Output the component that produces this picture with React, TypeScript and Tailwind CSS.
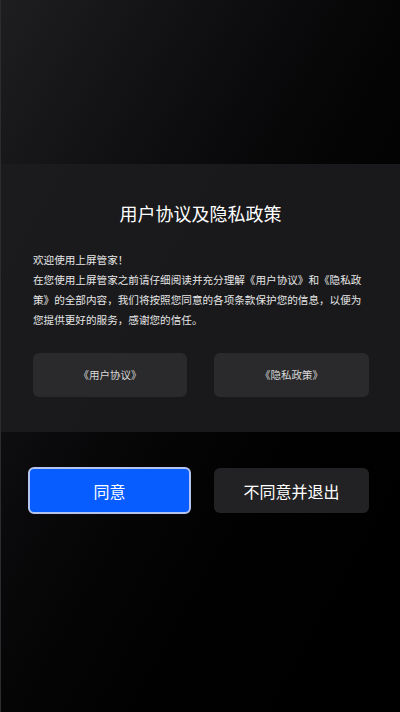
const font = { fontFamily: '"Noto Sans CJK SC", "Noto Sans", sans-serif' }

export default function App() {
  return (
    <div
      className="w-[400px] h-[712px] overflow-hidden flex flex-col bg-gradient-to-br from-[#1e1e21] to-black border-l border-[#2c2c30]"
      style={font}
    >
      {/* top blank area */}
      <div className="h-[164px] shrink-0" />

      {/* Agreement panel */}
      <div className="h-[268px] shrink-0 bg-[#1c1c1e]/90 flex flex-col px-[32px]">
        <h1 className="mt-[39px] h-[20px] leading-[20px] text-center text-[18px] text-white">
          用户协议及隐私政策
        </h1>

        <p className="mt-[27px] text-[10.6px] leading-[20px] text-[#e6e6e6] whitespace-nowrap">
          欢迎使用上屏管家！
          <br />
          在您使用上屏管家之前请仔细阅读并充分理解《用户协议》和《隐私政
          <br />
          策》的全部内容，我们将按照您同意的各项条款保护您的信息，以便为
          <br />
          您提供更好的服务，感谢您的信任。
        </p>

        <div className="mt-[23px] flex justify-between">
          <button className="w-[154px] h-[44px] rounded-md bg-[#2a2a2c] text-[10.5px] text-[#d8d8d8]">
            《用户协议》
          </button>
          <button className="w-[155px] h-[44px] rounded-md bg-[#2a2a2c] text-[10.5px] text-[#d8d8d8] mr-[-1px]">
            《隐私政策》
          </button>
        </div>
      </div>

      {/* Action buttons */}
      <div className="mt-[35px] flex justify-between items-center pl-[27px] pr-[31px]">
        <button className="w-[163px] h-[47px] rounded-[6px] border-2 border-[#b4c4ee] bg-[#075dff] text-[16px] text-white">
          同意
        </button>
        <button className="w-[155px] h-[45px] rounded-[6px] bg-[#222224] text-[16px] text-white">
          不同意并退出
        </button>
      </div>
    </div>
  )
}
